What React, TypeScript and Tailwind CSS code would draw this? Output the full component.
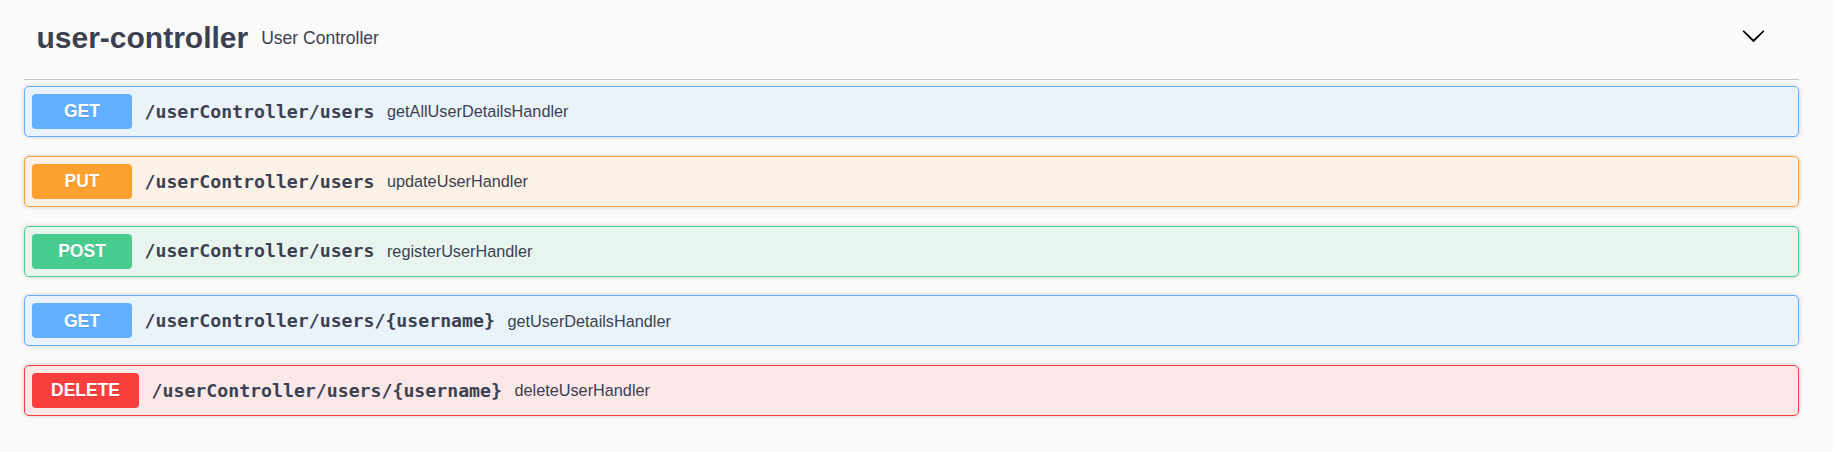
const ops = [
  {
    method: "GET",
    path: "/userController/users",
    summary: "getAllUserDetailsHandler",
    box: "border-[#61affe] bg-[#ebf3fa]",
    badge: "bg-[#61affe]",
  },
  {
    method: "PUT",
    path: "/userController/users",
    summary: "updateUserHandler",
    box: "border-[#fca130] bg-[#fbf1e6]",
    badge: "bg-[#fca130]",
  },
  {
    method: "POST",
    path: "/userController/users",
    summary: "registerUserHandler",
    box: "border-[#49cc90] bg-[#e8f5ef]",
    badge: "bg-[#49cc90]",
  },
  {
    method: "GET",
    path: "/userController/users/{username}",
    summary: "getUserDetailsHandler",
    box: "border-[#61affe] bg-[#ebf3fa]",
    badge: "bg-[#61affe]",
  },
  {
    method: "DELETE",
    path: "/userController/users/{username}",
    summary: "deleteUserHandler",
    box: "border-[#f93e3e] bg-[#fae7e7]",
    badge: "bg-[#f93e3e]",
  },
];

const sans = "font-['Liberation_Sans',Arial,sans-serif]";

const App: React.FC = () => {
  return (
    <div className={`min-h-screen w-full bg-[#fafafa] pl-6 pr-[34px] text-[#3b4151] ${sans}`}>
      <div className="flex h-[80px] items-center border-b border-[#c4c6cb] pb-[2px] pl-[12.5px] pr-[33px]">
        <span className="text-[30px] font-bold leading-[1.15]">user-controller</span>
        <span className="flex-1 pl-[13px] text-[17.5px] font-normal">User Controller</span>
        <svg
          className="mb-[7px]"
          width="25"
          height="25"
          viewBox="0 0 20 20"
          aria-hidden="true"
        >
          <path
            fill="#000"
            d="M17.418 6.109c.272-.268.709-.268.979 0s.271.701 0 .969l-7.908 7.83c-.27.268-.707.268-.979 0l-7.908-7.83c-.27-.268-.27-.701 0-.969.271-.268.709-.268.979 0L10 13.25l7.418-7.141z"
          />
        </svg>
      </div>

      <div className="mt-[6px] flex flex-col gap-[18.75px]">
        {ops.map((op, index) => (
          <div
            key={index}
            className={`flex h-[51px] items-center rounded-[5px] border px-[7px] shadow-[0_0_4px_rgba(0,0,0,0.19)] ${op.box}`}
          >
            <span
              className={`flex h-[35px] min-w-[100px] items-center justify-center rounded-[4px] px-[19px] text-[17.5px] font-bold text-white [text-shadow:0_1px_0_rgba(0,0,0,0.1)] ${op.badge}`}
            >
              {op.method}
            </span>
            <span className="px-[12.5px] font-['DejaVu_Sans_Mono',monospace] text-[18.2px] font-bold">
              {op.path}
            </span>
            <span className="text-[16.25px]">{op.summary}</span>
          </div>
        ))}
      </div>
    </div>
  );
};

export default App;
